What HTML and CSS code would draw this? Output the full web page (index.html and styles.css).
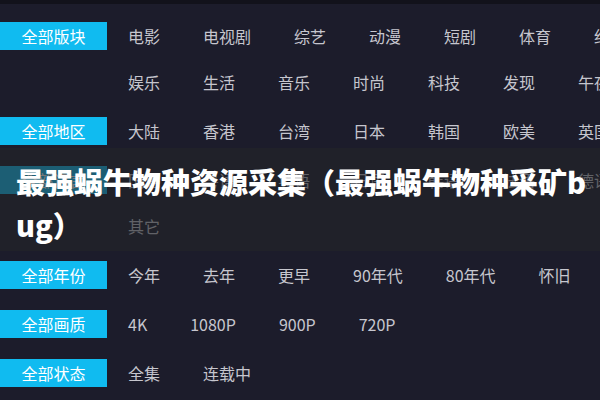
FILE: index.html
```html
<!DOCTYPE html>
<html lang="zh-CN">
<head>
  <meta charset="UTF-8" />
  <meta name="viewport" content="width=device-width, initial-scale=1.0"/>
  <title>最强蜗牛物种资源采集</title>
  <link rel="stylesheet" href="styles.css">
</head>
<body>

<div class="topbar"></div>

<div class="filters">
  <div class="group">
    <span class="label">全部版块</span>
    <ul class="items">
      <li>电影</li><li>电视剧</li><li>综艺</li><li>动漫</li><li>短剧</li><li>体育</li><li>纪录片</li>
      <li>娱乐</li><li>生活</li><li>音乐</li><li>时尚</li><li>科技</li><li>发现</li><li>午夜</li>
    </ul>
  </div>

  <div class="group">
    <span class="label">全部地区</span>
    <ul class="items">
      <li>大陆</li><li>香港</li><li>台湾</li><li>日本</li><li>韩国</li><li>欧美</li><li>英国</li>
    </ul>
  </div>

  <div class="group">
    <span class="label">全部语言</span>
    <ul class="items">
      <li>国语</li><li>粤语</li><li>英语</li><li>日语</li><li>韩语</li><li>法语</li><li>德语</li>
      <li>其它</li>
    </ul>
  </div>

  <div class="group">
    <span class="label">全部年份</span>
    <ul class="items">
      <li>今年</li><li>去年</li><li>更早</li><li>90年代</li><li>80年代</li><li>怀旧</li>
    </ul>
  </div>

  <div class="group">
    <span class="label">全部画质</span>
    <ul class="items">
      <li>4K</li><li>1080P</li><li>900P</li><li>720P</li>
    </ul>
  </div>

  <div class="group">
    <span class="label">全部状态</span>
    <ul class="items">
      <li>全集</li><li>连载中</li>
    </ul>
  </div>
</div>

<div class="banner">
  <h1>最强蜗牛物种资源采集（最强蜗牛物种采矿bug）</h1>
</div>

</body>
</html>
```

FILE: styles.css
```css
html, body {
  overflow: hidden;
}

body {
  margin: 0;
  position: relative;
  height: 400px;
  font-family: "Noto Sans CJK SC", "Noto Sans", sans-serif;
  background-color: #1c1c2b;
  color: #c6c6ce;
}

.topbar {
  height: 4px;
  background: #12121b;
}

.filters {
  padding-top: 9px;
}

.group {
  display: flex;
  align-items: flex-start;
  margin-bottom: 3px;
}

.label {
  flex: 0 0 107px;
  height: 28px;
  margin-top: 9px;
  margin-right: 21px;
  background: #10bbf0;
  color: #fff;
  font-size: 16px;
  line-height: 28px;
  text-align: center;
}

.items {
  display: flex;
  flex-wrap: wrap;
  flex-shrink: 0;
  column-gap: 43px;
  width: 540px;
  margin: 0;
  padding: 0;
  list-style: none;
}

.items li {
  font-size: 16px;
  line-height: 46px;
  white-space: nowrap;
}

.banner {
  position: absolute;
  top: 148px;
  left: 0;
  right: 0;
  height: 103px;
  box-sizing: border-box;
  padding: 12px 0 0 16px;
  background: rgba(36, 37, 40, 0.62);
}

.banner h1 {
  margin: 0;
  font-size: 29px;
  font-weight: 900;
  line-height: 43px;
  color: #fff;
  word-break: break-all;
}
```
